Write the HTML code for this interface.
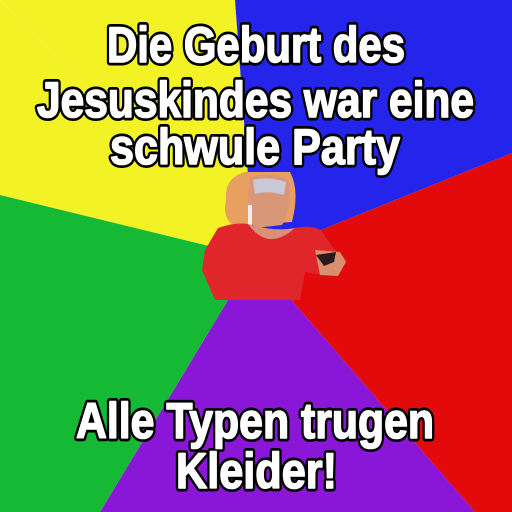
<!DOCTYPE html>
<html><head><style>
html,body{margin:0;padding:0;width:512px;height:512px;overflow:hidden}
</style></head><body>
<svg width="512" height="512" viewBox="0 0 512 512" xmlns="http://www.w3.org/2000/svg">
<polygon points="254,257 0,0 235,0" fill="#f2f224"/>
<polygon points="254,257 0,0 0,195" fill="#f2f224"/>
<polygon points="254,257 235,0 512,0 512,153" fill="#2424ea"/>
<polygon points="254,257 512,153 512,512 475,512" fill="#e20a0a"/>
<polygon points="254,257 475,512 100,512" fill="#8a16d8"/>
<polygon points="254,257 100,512 0,512 0,195" fill="#16b934"/>
<path d="M226,200 Q224,178 245,172 L290,172 Q300,190 292,222 L235,226 Q222,220 226,200Z" fill="#e8a060"/>
<path d="M250,178 Q270,170 288,180 Q294,205 282,225 L255,228 Q245,210 250,178Z" fill="#d89878"/>
<path d="M253,180 Q268,176 286,182 L284,195 Q268,190 255,194Z" fill="#c8c8d8"/>
<rect x="248" y="205" width="4" height="25" fill="#f0f0f0"/>
<path d="M218,228 Q235,222 248,224 Q268,250 295,228 Q315,224 322,232 L335,250 L345,258 L338,272 L322,275 L305,272 L300,300 L215,300 L202,270 L205,250Z" fill="#e0262a"/>
<path d="M248,224 Q268,252 295,228 Q275,232 248,224Z" fill="#d89078"/>
<path d="M315,250 L340,252 L346,262 L338,276 L320,275Z" fill="#d89070"/>
<path d="M316,255 L336,252 L334,262 L324,266Z" fill="#2a1a1a"/>
<g id="t" font-family="'Liberation Sans',sans-serif" font-weight="bold" font-size="50">
<g fill="#000" stroke="#000" stroke-width="7" stroke-linejoin="round">
<text x="107" y="62" textLength="298" lengthAdjust="spacingAndGlyphs">Die Geburt des</text>
<text x="37" y="117" textLength="437" lengthAdjust="spacingAndGlyphs">Jesuskindes war eine</text>
<text x="110" y="164" textLength="290" lengthAdjust="spacingAndGlyphs">schwule Party</text>
<text x="76" y="438" textLength="358" lengthAdjust="spacingAndGlyphs">Alle Typen trugen</text>
<text x="176" y="488" textLength="161" lengthAdjust="spacingAndGlyphs">Kleider!</text>
</g>
<g fill="#fff" stroke="#fff" stroke-width="1.6" stroke-linejoin="round">
<text x="107" y="62" textLength="298" lengthAdjust="spacingAndGlyphs">Die Geburt des</text>
<text x="37" y="117" textLength="437" lengthAdjust="spacingAndGlyphs">Jesuskindes war eine</text>
<text x="110" y="164" textLength="290" lengthAdjust="spacingAndGlyphs">schwule Party</text>
<text x="76" y="438" textLength="358" lengthAdjust="spacingAndGlyphs">Alle Typen trugen</text>
<text x="176" y="488" textLength="161" lengthAdjust="spacingAndGlyphs">Kleider!</text>
</g>
</g>
</svg>
</body></html>
